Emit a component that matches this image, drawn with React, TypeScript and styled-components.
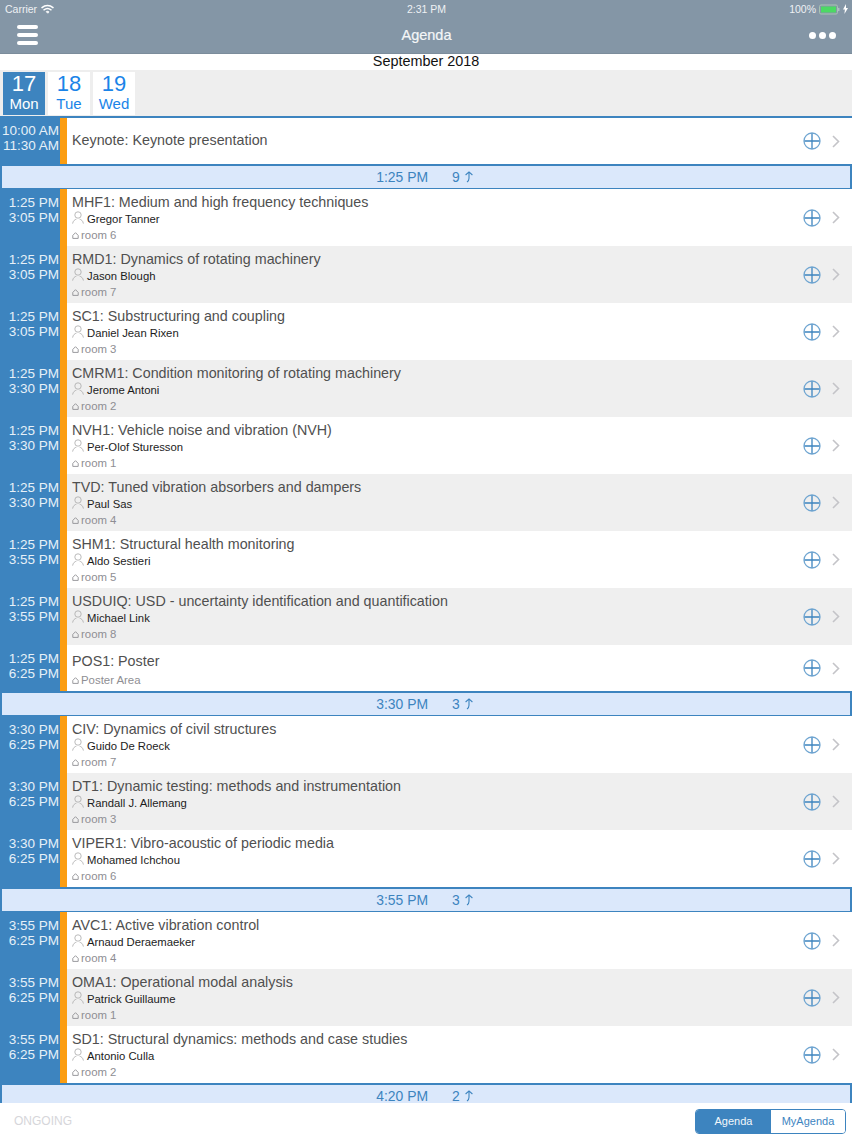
import React from "react";
import styled, { createGlobalStyle } from "styled-components";

type Session = { title: string; speaker?: string; room: string; start: string; end: string };
type Group = { time: string; count: number; sessions: Session[] };

const groups: Group[] = [
  {
    time: "1:25 PM",
    count: 9,
    sessions: [
      { title: "MHF1: Medium and high frequency techniques", speaker: "Gregor Tanner", room: "room 6", start: "1:25 PM", end: "3:05 PM" },
      { title: "RMD1: Dynamics of rotating machinery", speaker: "Jason Blough", room: "room 7", start: "1:25 PM", end: "3:05 PM" },
      { title: "SC1: Substructuring and coupling", speaker: "Daniel Jean Rixen", room: "room 3", start: "1:25 PM", end: "3:05 PM" },
      { title: "CMRM1: Condition monitoring of rotating machinery", speaker: "Jerome Antoni", room: "room 2", start: "1:25 PM", end: "3:30 PM" },
      { title: "NVH1: Vehicle noise and vibration (NVH)", speaker: "Per-Olof Sturesson", room: "room 1", start: "1:25 PM", end: "3:30 PM" },
      { title: "TVD: Tuned vibration absorbers and dampers", speaker: "Paul Sas", room: "room 4", start: "1:25 PM", end: "3:30 PM" },
      { title: "SHM1: Structural health monitoring", speaker: "Aldo Sestieri", room: "room 5", start: "1:25 PM", end: "3:55 PM" },
      { title: "USDUIQ: USD - uncertainty identification and quantification", speaker: "Michael Link", room: "room 8", start: "1:25 PM", end: "3:55 PM" },
      { title: "POS1: Poster", room: "Poster Area", start: "1:25 PM", end: "6:25 PM" },
    ],
  },
  {
    time: "3:30 PM",
    count: 3,
    sessions: [
      { title: "CIV: Dynamics of civil structures", speaker: "Guido De Roeck", room: "room 7", start: "3:30 PM", end: "6:25 PM" },
      { title: "DT1: Dynamic testing: methods and instrumentation", speaker: "Randall J. Allemang", room: "room 3", start: "3:30 PM", end: "6:25 PM" },
      { title: "VIPER1: Vibro-acoustic of periodic media", speaker: "Mohamed Ichchou", room: "room 6", start: "3:30 PM", end: "6:25 PM" },
    ],
  },
  {
    time: "3:55 PM",
    count: 3,
    sessions: [
      { title: "AVC1: Active vibration control", speaker: "Arnaud Deraemaeker", room: "room 4", start: "3:55 PM", end: "6:25 PM" },
      { title: "OMA1: Operational modal analysis", speaker: "Patrick Guillaume", room: "room 1", start: "3:55 PM", end: "6:25 PM" },
      { title: "SD1: Structural dynamics: methods and case studies", speaker: "Antonio Culla", room: "room 2", start: "3:55 PM", end: "6:25 PM" },
    ],
  },
  { time: "4:20 PM", count: 2, sessions: [] },
];

const days = [
  { num: "17", name: "Mon", active: true },
  { num: "18", name: "Tue", active: false },
  { num: "19", name: "Wed", active: false },
];

const Wifi = () => (
  <svg width="13" height="10" viewBox="0 0 13 10" fill="none" stroke="#fff" strokeLinecap="round">
    <path d="M1 3.6C4.2 .9 8.8 .9 12 3.6" strokeWidth="1.5" />
    <path d="M3 5.8C5 4.2 8 4.2 10 5.8" strokeWidth="1.5" />
    <path d="M6.5 9 5.2 7.7C5.9 7.1 7.1 7.1 7.8 7.7Z" fill="#fff" strokeWidth="0.8" />
  </svg>
);

const Battery = () => (
  <svg width="21" height="11" viewBox="0 0 21 11">
    <rect x="0.5" y="1" width="18" height="9" rx="1.5" fill="none" stroke="#a9c4b4" />
    <rect x="2" y="2.5" width="15" height="6" fill="#4cd964" />
    <rect x="19.2" y="4" width="1.2" height="3" fill="#b9c4cc" />
  </svg>
);

const Bolt = () => (
  <svg width="5" height="10" viewBox="0 0 5 10">
    <path d="M3 0 0 5.6h1.9L1.4 10 5 4H3z" fill="#fff" />
  </svg>
);

const AddIcon = () => (
  <svg width="18" height="18" viewBox="0 0 18 18" fill="none">
    <circle cx="9" cy="9" r="8" stroke="#6fa5d1" strokeWidth="1.3" />
    <path d="M9 1.5v15M1.5 9h15" stroke="#3d84bf" strokeWidth="1.3" />
  </svg>
);

const Chevron = () => (
  <svg width="8" height="13" viewBox="0 0 8 13" fill="none" stroke="#c4c4c8" strokeWidth="1.6">
    <path d="M1 1l5.5 5.5L1 12" />
  </svg>
);

const PersonIcon = () => (
  <svg width="12" height="13" viewBox="0 0 12 13" fill="none" stroke="#a9a9a9" strokeWidth="0.8">
    <circle cx="6" cy="4" r="3.2" />
    <path d="M.6 12.6C1 9.8 3 8.4 4.4 8.2M11.4 12.6C11 9.8 9 8.4 7.6 8.2" />
  </svg>
);

const HomeIcon = () => (
  <svg width="7" height="7" viewBox="0 0 7 7" fill="none" stroke="#8e8e93" strokeWidth="0.9">
    <path d="M3.5.7 6.2 3.4v3H.8v-3z" />
  </svg>
);

const UpArrow = () => (
  <svg width="10" height="12" viewBox="0 0 10 12" fill="none" stroke="#3d84bf" strokeWidth="1.1">
    <path d="M1.6 4 5 .9 8.4 4M5 1v6.2C5 9 4.2 10.2 3 11" />
  </svg>
);

const SessionRow = ({ session, odd }: { session: Session; odd: boolean }) => (
  <Row $odd={odd} $compact={!session.speaker}>
    <TimeCell>
      <span>{session.start}</span>
      <span>{session.end}</span>
    </TimeCell>
    <Marker />
    <Body $compact={!session.speaker}>
      <Title>{session.title}</Title>
      {session.speaker && (
        <Speaker>
          <PersonIcon />
          {session.speaker}
        </Speaker>
      )}
      <Room $compact={!session.speaker}>
        <HomeIcon />
        {session.room}
      </Room>
    </Body>
    <Actions>
      <AddIcon />
      <Chevron />
    </Actions>
  </Row>
);

export default function App() {
  return (
    <>
      <GlobalStyle />
      <Page>
        <TopBar>
          <StatusBar>
            <StatusSide>
              Carrier <Wifi />
            </StatusSide>
            <StatusTime>2:31 PM</StatusTime>
            <StatusSide $right>
              100% <Battery />
              <Bolt />
            </StatusSide>
          </StatusBar>
          <NavBar>
            <Burger>
              <i />
              <i />
              <i />
            </Burger>
            <NavTitle>Agenda</NavTitle>
            <Dots>
              <i />
              <i />
              <i />
            </Dots>
          </NavBar>
        </TopBar>
        <Month>September 2018</Month>
        <DayBar>
          {days.map((d) => (
            <DayTab key={d.num} $active={d.active}>
              <DayNum>{d.num}</DayNum>
              <DayName>{d.name}</DayName>
            </DayTab>
          ))}
        </DayBar>
        <List>
          <KeynoteRow>
            <KeynoteTime>
              <span>10:00 AM</span>
              <span>11:30 AM</span>
            </KeynoteTime>
            <Marker />
            <KeynoteTitle>Keynote: Keynote presentation</KeynoteTitle>
            <Actions>
              <AddIcon />
              <Chevron />
            </Actions>
          </KeynoteRow>
          {groups.map((g) => (
            <React.Fragment key={g.time}>
              <GroupHeader>
                <span>{g.time}</span>
                <GroupCount>
                  {g.count} <UpArrow />
                </GroupCount>
              </GroupHeader>
              {g.sessions.map((s, i) => (
                <SessionRow key={s.title} session={s} odd={i % 2 === 1} />
              ))}
            </React.Fragment>
          ))}
        </List>
        <Footer>
          <Ongoing>ONGOING</Ongoing>
          <Segment>
            <SegmentButton $active>Agenda</SegmentButton>
            <SegmentButton>MyAgenda</SegmentButton>
          </Segment>
        </Footer>
      </Page>
    </>
  );
}

const GlobalStyle = createGlobalStyle`
  html, body {
    margin: 0;
    padding: 0;
    background: #fff;
  }
  * {
    box-sizing: border-box;
  }
`;

const Page = styled.div`
  width: 852px;
  height: 1136px;
  display: flex;
  flex-direction: column;
  overflow: hidden;
  background: #fff;
  font-family: "Liberation Sans", Arial, sans-serif;
`;

const TopBar = styled.header`
  height: 54px;
  flex: none;
  background: #8496a6;
  color: #fff;
  border-bottom: 1px solid #7b8c9b;
`;

const StatusBar = styled.div`
  height: 17px;
  padding: 1px 4px 0 5px;
  display: grid;
  grid-template-columns: 1fr auto 1fr;
  align-items: center;
  font-size: 10.5px;
  color: #eef1f4;
`;

const StatusSide = styled.div<{ $right?: boolean }>`
  display: flex;
  align-items: center;
  gap: ${(p) => (p.$right ? "3px" : "4px")};
  justify-content: ${(p) => (p.$right ? "flex-end" : "flex-start")};
`;

const StatusTime = styled.div`
  text-align: center;
`;

const NavBar = styled.div`
  height: 36px;
  padding: 0 16px 0 17px;
  display: grid;
  grid-template-columns: 1fr auto 1fr;
  align-items: center;
`;

const Burger = styled.div`
  width: 21px;
  display: flex;
  flex-direction: column;
  gap: 4px;
  i {
    display: block;
    height: 4px;
    border-radius: 2px;
    background: #fff;
  }
`;

const NavTitle = styled.div`
  font-size: 14.5px;
  color: #f4f6f8;
  -webkit-text-stroke: 0.2px #f4f6f8;
`;

const Dots = styled.div`
  display: flex;
  gap: 3px;
  justify-content: flex-end;
  i {
    display: block;
    width: 7px;
    height: 7px;
    border-radius: 50%;
    background: #fff;
  }
`;

const Month = styled.div`
  height: 16px;
  flex: none;
  text-align: center;
  font-size: 14.4px;
  line-height: 15px;
  color: #111;
`;

const DayBar = styled.nav`
  height: 48px;
  flex: none;
  padding: 2px 0 0 3px;
  display: flex;
  align-items: flex-start;
  gap: 3px;
  background: #eeeeee;
  border-bottom: 2px solid #3d84bf;
`;

const DayTab = styled.div<{ $active: boolean }>`
  width: 42px;
  height: 43px;
  display: flex;
  flex-direction: column;
  align-items: center;
  background: ${(p) => (p.$active ? "#3d84bf" : "#fff")};
  color: ${(p) => (p.$active ? "#fff" : "#1a84e8")};
`;

const DayNum = styled.div`
  font-size: 22px;
  line-height: 24px;
`;

const DayName = styled.div`
  font-size: 15px;
  line-height: 16px;
`;

const List = styled.main`
  flex: 1;
  min-height: 0;
  overflow: hidden;
`;

const Row = styled.article<{ $odd: boolean; $compact: boolean }>`
  height: ${(p) => (p.$compact ? "46px" : "57px")};
  display: flex;
  background: ${(p) => (p.$odd ? "#efefef" : "#fff")};
`;

const KeynoteRow = styled.article`
  height: 46px;
  display: flex;
  background: #fff;
`;

const TimeCell = styled.div`
  width: 60px;
  flex: none;
  padding: 6px 1px 0 0;
  display: flex;
  flex-direction: column;
  align-items: flex-end;
  background: #3d84bf;
  color: #e6f0f8;
  font-size: 13.5px;
  line-height: 15px;
`;

const KeynoteTime = styled(TimeCell)`
  padding-top: 5px;
`;

const Marker = styled.div`
  width: 7px;
  flex: none;
  background: #fb9d12;
`;

const Body = styled.div<{ $compact: boolean }>`
  flex: 1;
  min-width: 0;
  padding: ${(p) => (p.$compact ? "8px" : "5px")} 0 0 5px;
`;

const Title = styled.div`
  font-size: 14.3px;
  line-height: 17px;
  color: #505050;
`;

const KeynoteTitle = styled(Title)`
  flex: 1;
  padding: 14px 0 0 5px;
`;

const Speaker = styled.div`
  height: 15px;
  display: flex;
  align-items: center;
  gap: 3px;
  font-size: 11.3px;
  color: #1c1c1c;
  svg {
    margin-top: -3px;
  }
`;

const Room = styled.div<{ $compact: boolean }>`
  margin-top: ${(p) => (p.$compact ? "3px" : "2px")};
  display: flex;
  align-items: center;
  gap: 2px;
  font-size: 11.4px;
  line-height: 14px;
  color: #8e8e93;
`;

const Actions = styled.div`
  width: 49px;
  flex: none;
  padding-right: 12px;
  display: flex;
  align-items: center;
  justify-content: space-between;
`;

const GroupHeader = styled.div`
  height: 25px;
  display: flex;
  align-items: center;
  justify-content: center;
  gap: 24px;
  padding: 0 2px 0 0;
  background: #dbe8fb;
  border: 2px solid #3d84bf;
  border-bottom-width: 1px;
  font-size: 13.9px;
  color: #3d84bf;
`;

const GroupCount = styled.span`
  display: flex;
  align-items: center;
  gap: 4px;
`;

const Footer = styled.footer`
  height: 33px;
  flex: none;
  padding: 2px 6px 0 14px;
  display: flex;
  align-items: center;
  justify-content: space-between;
  background: #fff;
`;

const Ongoing = styled.div`
  font-size: 12px;
  color: #d6d6da;
`;

const Segment = styled.div`
  width: 151px;
  height: 25px;
  margin-top: 1px;
  display: grid;
  grid-template-columns: 75px 1fr;
  border: 1px solid #3d84bf;
  border-radius: 4px;
  overflow: hidden;
`;

const SegmentButton = styled.div<{ $active?: boolean }>`
  display: flex;
  align-items: center;
  justify-content: center;
  font-size: 11px;
  background: ${(p) => (p.$active ? "#3d84bf" : "#fff")};
  color: ${(p) => (p.$active ? "#f2f7fb" : "#3d84bf")};
`;
